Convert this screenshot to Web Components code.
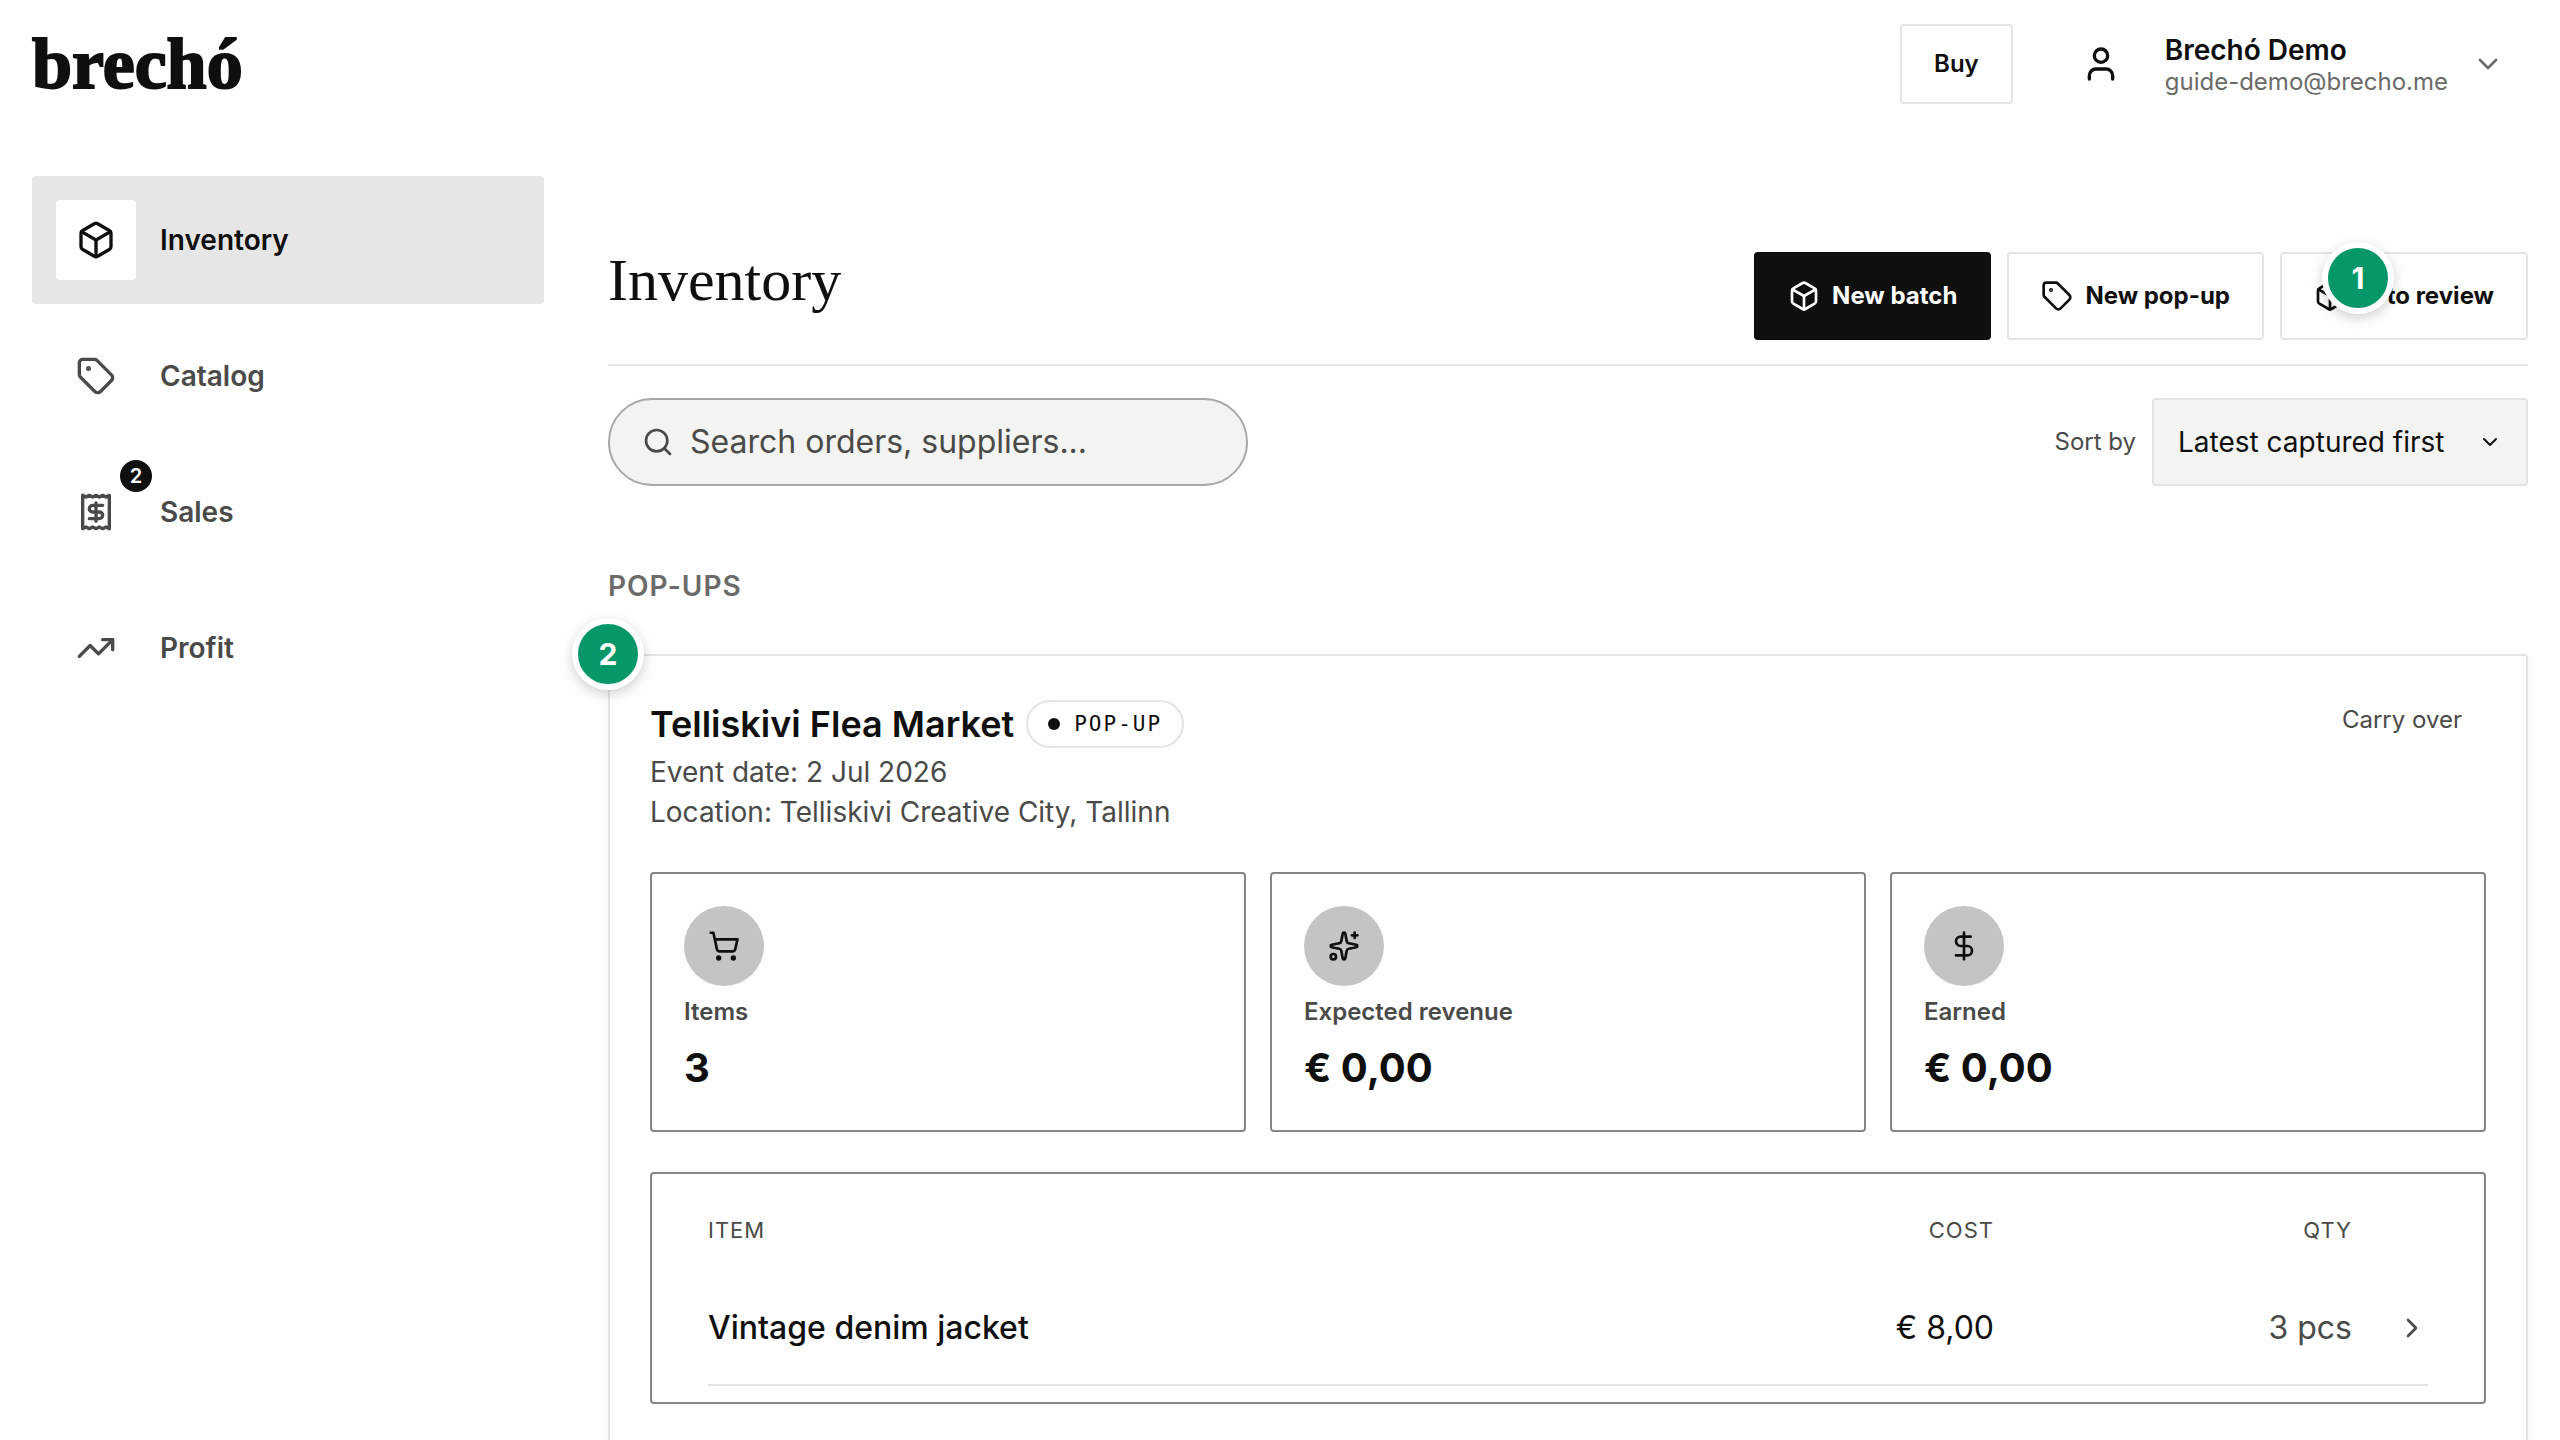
<!DOCTYPE html>
<html lang="en">
<head>
<meta charset="utf-8">
<meta name="viewport" content="width=device-width, initial-scale=1">
<title>Inventory - Brechó</title>
<style>
  :root {
    --ink: #0f0f0e;
    --text: #4a4a48;
    --muted: #6b6b69;
    --line: #e4e4e2;
    --line-strong: #858585;
    --surface: #f3f3f1;
    --paper: #fefefe;
    --serif: "Liberation Serif", serif;
    --mono: "DejaVu Sans Mono", monospace;
  }

  body {
    margin: 0;
    height: 100vh;
    overflow: hidden;
    background: var(--paper);
    color: var(--ink);
    font: 400 24px/36px Inter, sans-serif;
  }
</style>
</head>
<body>

<app-header></app-header>

<app-layout>
  <side-nav slot="nav">
    <nav-item icon="box" active>Inventory</nav-item>
    <nav-item icon="tag">Catalog</nav-item>
    <nav-item icon="receipt" count="2">Sales</nav-item>
    <nav-item icon="trend">Profit</nav-item>
  </side-nav>

  <page-heading text="Inventory">
    <action-button icon="box" primary>New batch</action-button>
    <action-button icon="tag">New pop-up</action-button>
    <action-button icon="box" step="1">3 to review</action-button>
  </page-heading>

  <list-tools></list-tools>

  <popup-section>
    <popup-card>
      <stat-card icon="cart" label="Items">3</stat-card>
      <stat-card icon="sparkles" label="Expected revenue">€ 0,00</stat-card>
      <stat-card icon="dollar" label="Earned">€ 0,00</stat-card>
      <item-table slot="items"></item-table>
    </popup-card>
  </popup-section>
</app-layout>

<script>
const ICONS = {
  box: `<path d="M21 8a2 2 0 0 0-1-1.73l-7-4a2 2 0 0 0-2 0l-7 4A2 2 0 0 0 3 8v8a2 2 0 0 0 1 1.73l7 4a2 2 0 0 0 2 0l7-4A2 2 0 0 0 21 16Z"/><path d="m3.3 7 8.7 5 8.7-5"/><path d="M12 22V12"/>`,
  tag: `<path d="M12.586 2.586A2 2 0 0 0 11.172 2H4a2 2 0 0 0-2 2v7.172a2 2 0 0 0 .586 1.414l8.704 8.704a2.426 2.426 0 0 0 3.42 0l6.58-6.58a2.426 2.426 0 0 0 0-3.42z"/><circle cx="7.5" cy="7.5" r=".5" fill="currentColor"/>`,
  receipt: `<path d="M4 2v20l2-1 2 1 2-1 2 1 2-1 2 1 2-1 2 1V2l-2 1-2-1-2 1-2-1-2 1-2-1-2 1Z"/><path d="M16 8h-6a2 2 0 1 0 0 4h4a2 2 0 1 1 0 4H8"/><path d="M12 17.5v-11"/>`,
  trend: `<path d="M16 7h6v6"/><path d="m22 7-8.5 8.5-5-5L2 17"/>`,
  user: `<path d="M19 21v-2a4 4 0 0 0-4-4H9a4 4 0 0 0-4 4v2"/><circle cx="12" cy="7" r="4"/>`,
  search: `<path d="m21 21-4.34-4.34"/><circle cx="11" cy="11" r="8"/>`,
  down: `<path d="m6 9 6 6 6-6"/>`,
  right: `<path d="m9 18 6-6-6-6"/>`,
  cart: `<circle cx="8" cy="21" r="1"/><circle cx="19" cy="21" r="1"/><path d="M2.05 2.05h2l2.66 12.42a2 2 0 0 0 2 1.58h9.78a2 2 0 0 0 1.95-1.57l1.65-7.43H5.12"/>`,
  sparkles: `<path d="M11.017 2.814a1 1 0 0 1 1.966 0l1.051 5.558a2 2 0 0 0 1.594 1.594l5.558 1.051a1 1 0 0 1 0 1.966l-5.558 1.051a2 2 0 0 0-1.594 1.594l-1.051 5.558a1 1 0 0 1-1.966 0l-1.051-5.558a2 2 0 0 0-1.594-1.594l-5.558-1.051a1 1 0 0 1 0-1.966l5.558-1.051a2 2 0 0 0 1.594-1.594z"/><path d="M20 2v4"/><path d="M22 4h-4"/><circle cx="4" cy="20" r="2"/>`,
  dollar: `<path d="M12 2v20"/><path d="M17 5H9.5a3.5 3.5 0 0 0 0 7h5a3.5 3.5 0 0 1 0 7H6"/>`
};

// Shared base: every element renders its template once into an open shadow root
class BaseElement extends HTMLElement {
  constructor(){
    super();
    this.attachShadow({mode:"open"});
  }

  getTemplate(){
    const template = document.createElement("template");
    template.innerHTML = `
      <style>
        * { box-sizing: border-box; margin: 0; padding: 0; }
        button, input, select { font: inherit; color: inherit; background: none; border: 0; cursor: pointer; }
        a { color: inherit; text-decoration: none; }
        ${this.getStyles()}
      </style>
      ${this.getMarkup()}
    `;
    return template;
  }

  connectedCallback(){
    if (!this.shadowRoot.firstChild) {
      this.shadowRoot.appendChild(this.getTemplate().content.cloneNode(true));
    }
  }
}

class AppIcon extends BaseElement {
  getMarkup(){
    return `<svg viewBox="0 0 24 24" aria-hidden="true">${ICONS[this.getAttribute("name")]}</svg>`;
  }

  getStyles(){
    return `
      :host { display: block; flex: none; width: 32px; height: 32px; }
      :host([size="large"]) { width: 40px; height: 40px; }
      :host([size="small"]) { width: 24px; height: 24px; }
      svg {
        display: block;
        width: 100%;
        height: 100%;
        fill: none;
        stroke: currentColor;
        stroke-width: 2;
        stroke-linecap: round;
        stroke-linejoin: round;
      }
    `;
  }
}

// Green numbered marker, centred on the top left corner of its parent
class StepMarker extends BaseElement {
  getMarkup(){
    return `<slot></slot>`;
  }

  getStyles(){
    return `
      :host {
        position: absolute;
        top: 0;
        left: 0;
        transform: translate(-50%, -50%);
        z-index: 2;
        display: grid;
        place-items: center;
        box-sizing: border-box;
        width: 72px;
        height: 72px;
        border: 6px solid #fff;
        border-radius: 50%;
        background: #059669;
        box-shadow: 0 4px 12px rgba(0, 0, 0, .18);
        color: #fff;
        font: 700 30px/36px Inter, sans-serif;
      }
    `;
  }
}

class AppHeader extends BaseElement {
  getMarkup(){
    return `
      <header>
        <a class="logo" href="#">brechó</a>
        <button class="buy" type="button">Buy</button>
        <button class="account" type="button">
          <app-icon name="user" size="large"></app-icon>
          <span class="who">
            <strong>Brechó Demo</strong>
            <span>guide-demo@brecho.me</span>
          </span>
          <app-icon class="more" name="down"></app-icon>
        </button>
      </header>
    `;
  }

  getStyles(){
    return `
      :host { display: block; }
      header {
        display: flex;
        align-items: center;
        height: 128px;
        padding: 0 32px;
      }
      .logo {
        margin-right: auto;
        font: 700 72px/80px var(--serif);
        -webkit-text-stroke: 2px currentColor;
      }
      .buy {
        height: 80px;
        padding: 0 32px;
        border: 2px solid var(--line);
        border-radius: 4px;
        font-weight: 600;
      }
      .account {
        display: flex;
        align-items: center;
        margin-left: 44px;
        padding: 0 24px;
        text-align: left;
      }
      .who {
        display: flex;
        flex-direction: column;
        margin: 0 24px 0 44px;
        color: var(--muted);
        line-height: 28px;
      }
      strong {
        color: var(--ink);
        font: 600 28px/36px Inter, sans-serif;
      }
      .more { color: var(--muted); }
    `;
  }
}

class AppLayout extends BaseElement {
  getMarkup(){
    return `
      <slot name="nav"></slot>
      <main><slot></slot></main>
    `;
  }

  getStyles(){
    return `
      :host {
        display: grid;
        grid-template-columns: 512px minmax(0, 1fr);
        gap: 64px;
        padding: 48px 32px;
      }
      main { padding-top: 76px; }
    `;
  }
}

class SideNav extends BaseElement {
  getMarkup(){
    return `<nav><slot></slot></nav>`;
  }

  getStyles(){
    return `
      :host { display: block; }
      nav { display: flex; flex-direction: column; gap: 8px; }
    `;
  }
}

class NavItem extends BaseElement {
  getMarkup(){
    const count = this.getAttribute("count");
    return `
      <a href="#">
        <span class="icon">
          <app-icon name="${this.getAttribute("icon")}" size="large"></app-icon>
          ${count ? `<span class="count">${count}</span>` : ""}
        </span>
        <slot></slot>
      </a>
    `;
  }

  getStyles(){
    return `
      :host { display: block; color: var(--text); }
      :host([active]) { color: var(--ink); }
      a {
        display: flex;
        align-items: center;
        gap: 24px;
        padding: 24px;
        border-radius: 4px;
        font-size: 28px;
        font-weight: 600;
      }
      :host([active]) a { background: #e6e6e6; }
      .icon {
        position: relative;
        display: grid;
        place-items: center;
        width: 80px;
        height: 80px;
        border-radius: 4px;
      }
      :host([active]) .icon { background: #fff; }
      .count {
        position: absolute;
        top: -12px;
        right: -16px;
        width: 32px;
        border-radius: 50%;
        background: var(--ink);
        color: #fff;
        font-size: 20px;
        line-height: 32px;
        text-align: center;
      }
    `;
  }
}

class PageHeading extends BaseElement {
  getMarkup(){
    return `
      <h1>${this.getAttribute("text")}</h1>
      <div><slot></slot></div>
    `;
  }

  getStyles(){
    return `
      :host {
        display: flex;
        align-items: flex-start;
        justify-content: space-between;
        padding-bottom: 24px;
        border-bottom: 2px solid var(--line);
      }
      h1 { font: 400 60px/56px var(--serif); }
      div { display: flex; gap: 16px; }
    `;
  }
}

class ActionButton extends BaseElement {
  getMarkup(){
    const step = this.getAttribute("step");
    return `
      <button type="button">
        <app-icon name="${this.getAttribute("icon")}"></app-icon>
        <span>
          <slot></slot>
          ${step ? `<step-marker>${step}</step-marker>` : ""}
        </span>
      </button>
    `;
  }

  getStyles(){
    return `
      :host { display: block; }
      button {
        display: flex;
        align-items: center;
        gap: 12px;
        height: 88px;
        padding: 0 32px;
        border: 2px solid var(--line);
        border-radius: 4px;
        font-weight: 700;
        white-space: nowrap;
      }
      :host([primary]) button {
        border-color: var(--ink);
        background: var(--ink);
        color: #fff;
      }
      span { position: relative; }
      /* room for the marker that sits on the label */
      :host([step]) span { min-width: 136px; text-align: right; }
    `;
  }
}

class ListTools extends BaseElement {
  getMarkup(){
    return `
      <label class="search">
        <app-icon name="search"></app-icon>
        <input type="text" placeholder="Search orders, suppliers..." aria-label="Search orders, suppliers">
      </label>
      <div class="sort">
        <label for="sort">Sort by</label>
        <div class="select">
          <select id="sort">
            <option>Latest captured first</option>
          </select>
          <app-icon name="down" size="small"></app-icon>
        </div>
      </div>
    `;
  }

  getStyles(){
    return `
      :host {
        display: flex;
        justify-content: space-between;
        margin: 32px 0 80px;
        color: var(--text);
      }
      .search {
        display: flex;
        align-items: center;
        gap: 16px;
        width: 640px;
        height: 88px;
        padding: 0 32px;
        border: 2px solid #a8a8a6;
        border-radius: 44px;
        background: var(--surface);
      }
      input {
        flex: 1;
        min-width: 0;
        font-size: 32px;
        line-height: 40px;
        outline: 0;
      }
      input::placeholder { color: var(--text); opacity: 1; }
      .sort { display: flex; align-items: center; gap: 16px; }
      /* the chevron shares the select's grid cell */
      .select {
        display: grid;
        align-items: center;
        color: var(--ink);
      }
      .select > * { grid-area: 1 / 1; }
      .select app-icon {
        justify-self: end;
        margin-right: 26px;
        pointer-events: none;
      }
      select {
        appearance: none;
        width: 376px;
        height: 88px;
        padding: 0 72px 0 24px;
        border: 2px solid var(--line);
        border-radius: 4px;
        background: var(--surface);
        font-size: 28px;
      }
    `;
  }
}

class PopupSection extends BaseElement {
  getMarkup(){
    return `
      <section>
        <h2>Pop-ups</h2>
        <slot></slot>
      </section>
    `;
  }

  getStyles(){
    return `
      :host { display: block; }
      h2 {
        margin-bottom: 48px;
        color: var(--muted);
        font-size: 28px;
        font-weight: 600;
        line-height: 40px;
        letter-spacing: 1px;
        text-transform: uppercase;
      }
    `;
  }
}

class PopupCard extends BaseElement {
  getMarkup(){
    return `
      <step-marker>2</step-marker>
      <article>
        <header>
          <div>
            <div class="title">
              <h3>Telliskivi Flea Market</h3>
              <span class="pill">Pop-up</span>
            </div>
            <p>Event date: 2 Jul 2026</p>
            <p>Location: Telliskivi Creative City, Tallinn</p>
          </div>
          <button type="button">Carry over</button>
        </header>
        <div class="stats"><slot></slot></div>
        <slot name="items"></slot>
      </article>
    `;
  }

  getStyles(){
    return `
      :host { display: block; position: relative; }
      article {
        display: flex;
        flex-direction: column;
        gap: 40px;
        padding: 40px 40px 80px;
        border: 2px solid var(--line);
        border-radius: 4px;
        box-shadow: 0 4px 8px rgba(0, 0, 0, .04);
      }
      header {
        display: flex;
        align-items: flex-start;
        justify-content: space-between;
      }
      .title { display: flex; align-items: center; gap: 12px; height: 56px; }
      h3 { font-size: 36px; font-weight: 600; line-height: 56px; }
      .pill {
        display: flex;
        align-items: center;
        gap: 14px;
        height: 48px;
        padding: 0 20px;
        border: 2px solid var(--line);
        border-radius: 24px;
        font: 400 21px/28px var(--mono);
        letter-spacing: 2px;
        text-transform: uppercase;
      }
      .pill::before {
        content: "";
        width: 12px;
        height: 12px;
        border-radius: 50%;
        background: var(--ink);
      }
      p { color: var(--text); font-size: 28px; line-height: 40px; }
      button { height: 48px; padding: 0 24px; color: var(--text); }
      .stats {
        display: grid;
        grid-template-columns: repeat(3, 1fr);
        gap: 24px;
      }
    `;
  }
}

class StatCard extends BaseElement {
  getMarkup(){
    return `
      <div class="icon"><app-icon name="${this.getAttribute("icon")}"></app-icon></div>
      <div class="label">${this.getAttribute("label")}</div>
      <div class="value"><slot></slot></div>
    `;
  }

  getStyles(){
    return `
      :host {
        display: flex;
        flex-direction: column;
        gap: 8px;
        padding: 32px;
        border: 2px solid var(--line-strong);
        border-radius: 4px;
      }
      .icon {
        display: grid;
        place-items: center;
        width: 80px;
        height: 80px;
        border-radius: 50%;
        background: #c4c4c2;
      }
      .label { color: var(--text); font-weight: 600; }
      .value { font-size: 40px; font-weight: 700; line-height: 60px; }
    `;
  }
}

class ItemTable extends BaseElement {
  getMarkup(){
    return `
      <table>
        <colgroup><col><col class="num"><col class="num"><col class="go"></colgroup>
        <thead>
          <tr><th>Item</th><th>Cost</th><th>Qty</th><th></th></tr>
        </thead>
        <tbody>
          <tr>
            <td><a href="#">Vintage denim jacket</a></td>
            <td>€ 8,00</td>
            <td class="qty">3 pcs</td>
            <td class="qty"><app-icon name="right"></app-icon></td>
          </tr>
        </tbody>
      </table>
    `;
  }

  getStyles(){
    return `
      :host {
        display: block;
        padding: 16px 56px;
        border: 2px solid var(--line-strong);
        border-radius: 4px;
      }
      table { width: 100%; table-layout: fixed; border-collapse: separate; border-spacing: 0; }
      .num { width: 358px; }
      .go { width: 76px; }
      th {
        height: 80px;
        color: var(--text);
        font-size: 22px;
        font-weight: 400;
        letter-spacing: 1px;
        text-transform: uppercase;
        text-align: right;
      }
      td {
        height: 116px;
        padding-top: 2px;
        border-bottom: 2px solid var(--line);
        font-size: 32px;
        text-align: right;
      }
      th:first-child, td:first-child { text-align: left; }
      td:first-child { font-weight: 500; }
      .qty { color: var(--text); }
      td app-icon { margin-left: auto; }
    `;
  }
}

customElements.define("app-icon", AppIcon);
customElements.define("step-marker", StepMarker);
customElements.define("app-header", AppHeader);
customElements.define("app-layout", AppLayout);
customElements.define("side-nav", SideNav);
customElements.define("nav-item", NavItem);
customElements.define("page-heading", PageHeading);
customElements.define("action-button", ActionButton);
customElements.define("list-tools", ListTools);
customElements.define("popup-section", PopupSection);
customElements.define("popup-card", PopupCard);
customElements.define("stat-card", StatCard);
customElements.define("item-table", ItemTable);
</script>
</body>
</html>
